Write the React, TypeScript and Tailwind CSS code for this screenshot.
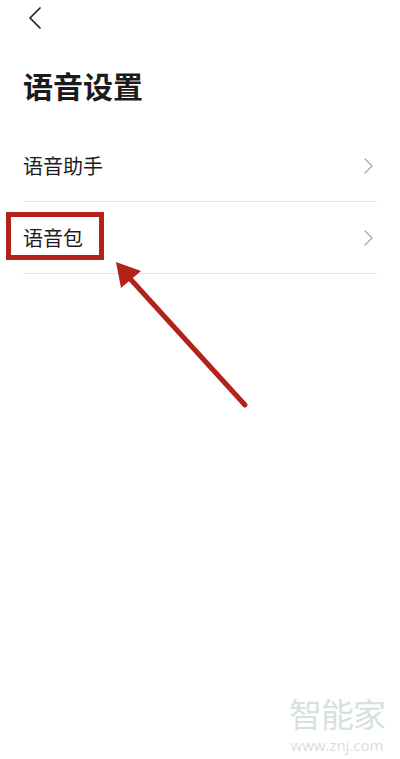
const font = { fontFamily: '"Noto Sans CJK SC", "Noto Sans", sans-serif' };

const rows = ['语音助手', '语音包'];

function Chevron({ className, dir }: { className: string; dir: 'left' | 'right' }) {
  const d = dir === 'left' ? 'M11 1 L1 11 L11 21' : 'M1 1 L8 8 L1 15';
  return (
    <svg className={className} viewBox={dir === 'left' ? '0 0 12 22' : '0 0 9 16'} fill="none">
      <path d={d} stroke="currentColor" strokeWidth={dir === 'left' ? 1.7 : 1.3} strokeLinecap="round" strokeLinejoin="round" />
    </svg>
  );
}

export default function App() {
  return (
    <div className="relative h-[759px] w-[400px] overflow-hidden bg-white text-[#1b1b1b]" style={font}>
      {/* top bar */}
      <div className="flex h-[36px] items-center pl-[29px]">
        <Chevron dir="left" className="h-[22px] w-[12px] text-[#222]" />
      </div>

      <h1 className="mb-[25px] mt-[29px] h-[40px] pl-[23px] text-[30px] font-bold leading-[40px]">语音设置</h1>

      <div className="mx-[23px]">
        {rows.map((label) => (
          <div key={label} className="flex h-[72px] items-center justify-between border-b border-[#e6e6e6]">
            <span className="text-[20px] leading-none">{label}</span>
            <Chevron dir="right" className="mr-[4px] h-[16px] w-[9px] text-[#a8a8a8]" />
          </div>
        ))}
      </div>

      {/* annotation */}
      <div className="absolute left-[6px] top-[212px] h-[48px] w-[98px] border-[5px] border-[#b3221a]" />
      <svg className="absolute left-0 top-0" width="400" height="759" viewBox="0 0 400 759">
        <line x1="245" y1="405" x2="124" y2="272" stroke="#b3221a" strokeWidth="5" strokeLinecap="round" />
        <polygon points="116,262 141,271 121,288" fill="#b3221a" />
      </svg>

      {/* watermark */}
      <div className="absolute left-[289px] top-[694px] flex flex-col items-center gap-[6px] text-[#d6e1e2]">
        <span className="text-[33px] leading-[38px] tracking-[-1px]">智能家</span>
        <span className="text-[15px] leading-[14px]" style={{ fontFamily: '"Open Sans", sans-serif' }}>www.znj.com</span>
      </div>
    </div>
  );
}
